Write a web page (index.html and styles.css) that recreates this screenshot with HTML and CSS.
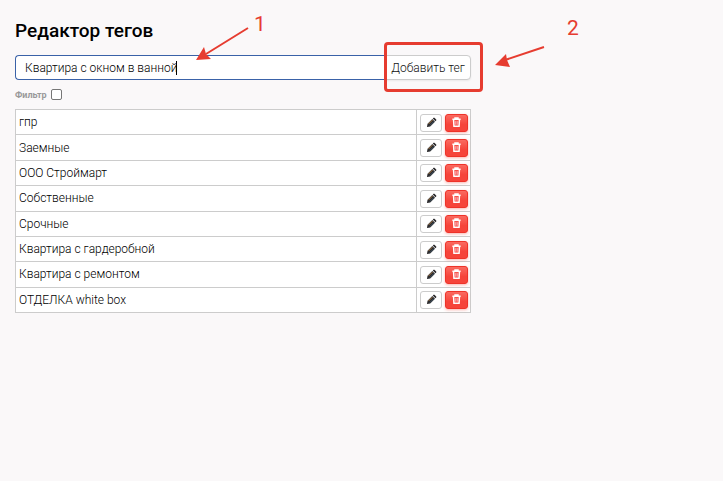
FILE: index.html
```html
<!DOCTYPE html>
<html lang="ru">
<head>
<meta charset="utf-8">
<title>Редактор тегов</title>
<link rel="stylesheet" href="styles.css">
</head>
<body>
<svg class="sprites" aria-hidden="true">
  <symbol id="pencil" viewBox="0 0 12 12">
    <path d="M1 11l.7-3.600 5.200-5.200 2.900 2.900-5.200 5.200z" fill="#2b2a2c"/>
    <path d="M7.400 1.700l.8-.8q.5-.4 1 0l1.900 1.900q.4.500 0 1l-.8.800z" fill="#2b2a2c"/>
    <path d="M2.700 7.700l4.400-4.400" stroke="#c08a50" stroke-width=".9"/>
    <path d="M4.300 9.300l4.400-4.400" stroke="#52758c" stroke-width=".7"/>
  </symbol>
  <symbol id="trash" viewBox="0 0 12 12">
    <path d="M1.500 2.500h9M4.300 2.300V1h3.400v1.300" fill="none" stroke="#fff" stroke-width="1.500"/>
    <path d="M2.800 3l.4 7h5.600L9.200 3" fill="none" stroke="#fff" stroke-width="1.600"/>
    <path d="M5.200 4.500v4M6.800 4.500v4" stroke="#ffd9e8" stroke-width=".8"/>
  </symbol>
</svg>
<main class="editor">
  <h1 class="title">Редактор тегов</h1>
  <form class="add-form">
    <div class="field">
      <input class="tag-input" type="text" value="Квартира с окном в ванной" aria-label="Название тега">
      <span class="caret"></span>
    </div>
    <div class="action">
      <button class="add-button" type="button">Добавить тег</button>
      <span class="highlight"></span>
    </div>
  </form>
  <div class="filter">
    <label for="filter">Фильтр</label>
    <input class="filter-box" id="filter" type="checkbox">
  </div>
  <table class="tags">
    <tbody>
      <tr><td class="name">гпр</td><td class="tools"><div class="buttons"><button class="edit" type="button" aria-label="Изменить"><svg><use href="#pencil"/></svg></button><button class="delete" type="button" aria-label="Удалить"><svg><use href="#trash"/></svg></button></div></td></tr>
      <tr><td class="name">Заемные</td><td class="tools"><div class="buttons"><button class="edit" type="button" aria-label="Изменить"><svg><use href="#pencil"/></svg></button><button class="delete" type="button" aria-label="Удалить"><svg><use href="#trash"/></svg></button></div></td></tr>
      <tr><td class="name">ООО Строймарт</td><td class="tools"><div class="buttons"><button class="edit" type="button" aria-label="Изменить"><svg><use href="#pencil"/></svg></button><button class="delete" type="button" aria-label="Удалить"><svg><use href="#trash"/></svg></button></div></td></tr>
      <tr><td class="name">Собственные</td><td class="tools"><div class="buttons"><button class="edit" type="button" aria-label="Изменить"><svg><use href="#pencil"/></svg></button><button class="delete" type="button" aria-label="Удалить"><svg><use href="#trash"/></svg></button></div></td></tr>
      <tr><td class="name">Срочные</td><td class="tools"><div class="buttons"><button class="edit" type="button" aria-label="Изменить"><svg><use href="#pencil"/></svg></button><button class="delete" type="button" aria-label="Удалить"><svg><use href="#trash"/></svg></button></div></td></tr>
      <tr><td class="name">Квартира с гардеробной</td><td class="tools"><div class="buttons"><button class="edit" type="button" aria-label="Изменить"><svg><use href="#pencil"/></svg></button><button class="delete" type="button" aria-label="Удалить"><svg><use href="#trash"/></svg></button></div></td></tr>
      <tr><td class="name">Квартира с ремонтом</td><td class="tools"><div class="buttons"><button class="edit" type="button" aria-label="Изменить"><svg><use href="#pencil"/></svg></button><button class="delete" type="button" aria-label="Удалить"><svg><use href="#trash"/></svg></button></div></td></tr>
      <tr><td class="name">ОТДЕЛКА white box</td><td class="tools"><div class="buttons"><button class="edit" type="button" aria-label="Изменить"><svg><use href="#pencil"/></svg></button><button class="delete" type="button" aria-label="Удалить"><svg><use href="#trash"/></svg></button></div></td></tr>
    </tbody>
  </table>
</main>
<svg class="notes" width="600" height="100" aria-hidden="true">
  <path d="M248 28L206 54M544 47L505 60" class="shaft"/>
  <path d="M196 60L204 47L206 54L211 59ZM495 65L506 54L507 60L510 67Z" class="head"/>
  <text x="254" y="31">1</text>
  <text x="567" y="35">2</text>
</svg>
</body>
</html>
```

FILE: styles.css
```css
* { box-sizing: border-box; }

body {
  margin: 0;
  background: #faf8f9;
  color: #000;
  font: 300 12px/16px Roboto, sans-serif;
}

.sprites { position: absolute; width: 0; height: 0; }

.editor {
  max-width: 471px;
  padding: 18px 0 0 15px;
}

.title {
  margin: 0 0 12px;
  color: #000;
  font-size: 19px;
  font-weight: 500;
  line-height: 25px;
}

.add-form { display: flex; }

.field { position: relative; flex: 1; }

.tag-input {
  width: 100%;
  height: 25px;
  padding: 0 9px;
  border: 1px solid #3a62a8;
  border-right: 0;
  border-radius: 4px 0 0 4px;
  background: #fff;
  color: #000;
  font: inherit;
  outline: 0;
}

.caret {
  position: absolute;
  top: 6px;
  left: 161px;
  width: 1px;
  height: 14px;
  background: #000;
}

.action { position: relative; }

.add-button {
  width: 86px;
  height: 25px;
  padding: 0;
  border: 1px solid #ccc;
  border-radius: 0 4px 4px 0;
  background: #fff;
  color: #111;
  font: inherit;
  box-shadow: 0 1px 2px #0001;
}

.highlight {
  position: absolute;
  inset: -13px -12px -12px -1px;
  border: 3px solid #e63c30;
  border-radius: 4px;
}

.filter {
  display: flex;
  align-items: center;
  gap: 4px;
  height: 29px;
  color: #999;
  font-size: 9px;
  font-weight: 700;
}

.filter-box {
  appearance: none;
  width: 11px;
  height: 11px;
  margin: 0;
  border: 1px solid #767676;
  border-radius: 2px;
  background: #fff;
}

.tags {
  width: 100%;
  height: 204px;
  border-collapse: collapse;
  background: #fff;
}

.tags td {
  padding: 0 3px;
  border: 1px solid #ccc;
}

.tags .tools { width: 54px; padding: 1px 2px 0 3px; }

.buttons { display: flex; gap: 3px; }

.edit,
.delete {
  display: flex;
  align-items: center;
  justify-content: center;
  width: 22px;
  height: 18px;
  padding: 0 0 1px;
  border: 1px solid #ccc;
  border-radius: 3px;
  background: #fff;
}

.delete {
  width: 23px;
  border-color: #ee3329;
  background: linear-gradient(#fa6a60, #f6443a 60%);
  box-shadow: 0 1px 3px #f4433666;
}

.buttons svg { width: 11px; height: 11px; }

.notes {
  position: absolute;
  top: 0;
  left: 0;
  pointer-events: none;
  font: 400 21px Roboto, sans-serif;
}

.notes text,
.notes .head { fill: #e63c30; }

.notes .shaft { stroke: #e63c30; stroke-width: 2; }
```
